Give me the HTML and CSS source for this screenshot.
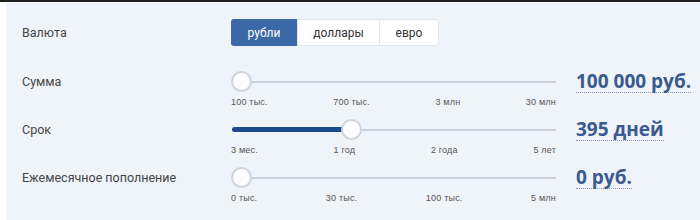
FILE: index.html
```html
<!DOCTYPE html>
<html lang="ru">
<head>
    <meta charset="UTF-8">
    <title>Калькулятор вклада</title>
    <link rel="stylesheet" href="styles.css">
</head>
<body>
    <div class="topbar"></div>

    <div class="calc">
        <div class="calc-row currency-row">
            <div class="row-label">Валюта</div>
            <div class="btn-group">
                <button class="btn btn-rub active">рубли</button>
                <button class="btn btn-usd">доллары</button>
                <button class="btn btn-eur">евро</button>
            </div>
        </div>

        <div class="calc-row slider-row">
            <div class="row-label">Сумма</div>
            <div class="slider">
                <div class="track">
                    <div class="track-fill" style="width: 0px"></div>
                    <div class="thumb" style="left: 0px"></div>
                </div>
                <div class="ticks">
                    <span>100 тыс.</span>
                    <span>700 тыс.</span>
                    <span>3 млн</span>
                    <span>30 млн</span>
                </div>
            </div>
            <div class="row-value"><span>100 000 руб.</span></div>
        </div>

        <div class="calc-row slider-row">
            <div class="row-label">Срок</div>
            <div class="slider">
                <div class="track">
                    <div class="track-fill" style="width: 118px"></div>
                    <div class="thumb" style="left: 110px"></div>
                </div>
                <div class="ticks">
                    <span>3 мес.</span>
                    <span>1 год</span>
                    <span>2 года</span>
                    <span>5 лет</span>
                </div>
            </div>
            <div class="row-value"><span>395 дней</span></div>
        </div>

        <div class="calc-row slider-row">
            <div class="row-label">Ежемесячное пополнение</div>
            <div class="slider">
                <div class="track">
                    <div class="track-fill" style="width: 0px"></div>
                    <div class="thumb" style="left: 0px"></div>
                </div>
                <div class="ticks">
                    <span>0 тыс.</span>
                    <span>30 тыс.</span>
                    <span>100 тыс.</span>
                    <span>5 млн</span>
                </div>
            </div>
            <div class="row-value"><span>0 руб.</span></div>
        </div>
    </div>
</body>
</html>
```

FILE: styles.css
```css
body {
    margin: 0;
    background: #fff;
    font-family: Roboto, 'Liberation Sans', sans-serif;
    color: #444;
    overflow: hidden;
}

.topbar {
    height: 2px;
    background: #1e1e1e;
}

.calc {
    margin: 1px 0 0 6px;
    height: 217px;
    padding: 16px 0 0 16px;
    box-sizing: border-box;
    background: #eff3fa;
}

.calc-row {
    display: grid;
    grid-template-columns: 209px 325px auto;
    align-items: start;
}

.currency-row {
    align-items: center;
}

.slider-row {
    margin-top: 11px;
}

.currency-row + .slider-row {
    margin-top: 25px;
}

.row-label {
    font-size: 12.5px;
    line-height: 21px;
    color: #454545;
}

/* currency switch */
.btn-group {
    display: flex;
    width: max-content;
    height: 27px;
    background: #fff;
    border: 1px solid #e2e6ed;
    border-radius: 3px;
    box-sizing: border-box;
}

.btn {
    font-family: Roboto, 'Liberation Sans', sans-serif;
    font-size: 12px;
    color: #333;
    background: none;
    border: none;
    border-left: 1px solid #e2e6ed;
    padding: 0;
    margin: 0;
}

.btn:first-child {
    border-left: none;
}

.btn-rub { width: 66px; }
.btn-usd { width: 82px; }
.btn-eur { width: 59px; }

.btn.active {
    background: #3b69a7;
    color: #fff;
    margin: -1px 0 -1px -1px;
    border-radius: 3px 0 0 3px;
}

/* slider */
.slider {
    width: 325px;
}

.track {
    position: relative;
    height: 21px;
}

.track::before {
    content: "";
    position: absolute;
    left: 1px;
    right: 0;
    top: 10px;
    height: 2px;
    background: #c9d0da;
}

.track-fill {
    position: absolute;
    left: 1px;
    top: 8px;
    height: 5px;
    border-radius: 3px;
    background: #1b4b8c;
}

.thumb {
    position: absolute;
    top: 0;
    width: 21px;
    height: 21px;
    box-sizing: border-box;
    border-radius: 50%;
    background: #fdfdfe;
    border: 2px solid #cfd5de;
}

.ticks {
    display: flex;
    justify-content: space-between;
    margin-top: 4px;
    font-family: 'Liberation Sans', Arial, sans-serif;
    font-size: 9px;
    letter-spacing: 0.2px;
    line-height: 12px;
    color: #555;
}

/* value */
.row-value {
    margin-left: 20px;
}

.row-value span {
    display: inline-block;
    font-family: 'Open Sans', sans-serif;
    font-weight: 700;
    font-size: 19px;
    line-height: 21px;
    color: #3b5a8e;
    border-bottom: 1px dotted #8499bd;
}
```
